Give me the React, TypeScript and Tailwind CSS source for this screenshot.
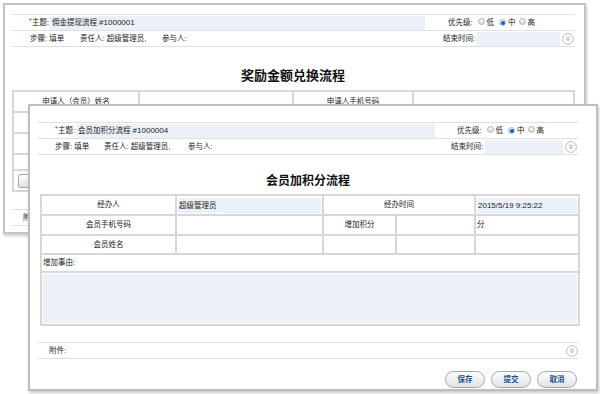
import React from 'react';

const FONT = "font-['Liberation_Sans','Noto_Sans_CJK_SC',sans-serif]";

function ExpandIcon({ className = '' }: { className?: string }) {
  return (
    <svg width="12" height="12" viewBox="0 0 12 12" className={`shrink-0 ${className}`}>
      <circle cx="6" cy="6" r="5.4" fill="#fff" stroke="#b8b8b8" strokeWidth="0.9" />
      <path
        d="M4.2 3.9 6 5.3 7.8 3.9M4.2 6.1 6 7.5 7.8 6.1"
        fill="none"
        stroke="#8c8c8c"
        strokeWidth="0.8"
      />
    </svg>
  );
}

function Radio({ checked = false }: { checked?: boolean }) {
  return (
    <span className="inline-flex h-[7px] w-[7px] shrink-0 items-center justify-center rounded-full border border-[#aab3be] bg-linear-to-b from-[#f6f6f6] to-[#dadada]">
      {checked && <span className="h-[4px] w-[4px] rounded-full bg-[#1d62b9]" />}
    </span>
  );
}

function Priority({ className = '' }: { className?: string }) {
  return (
    <div className={`flex items-center ${className}`}>
      <span>优先级:</span>
      <span className="ml-[5px]"><Radio /></span>
      <span className="ml-[2px]">低</span>
      <span className="ml-[5px]"><Radio checked /></span>
      <span className="ml-[2px]">中</span>
      <span className="ml-[3px]"><Radio /></span>
      <span className="ml-[2px]">高</span>
    </div>
  );
}

function Subject({ width, labelWidth, title, no }: { width: number; labelWidth: number; title: string; no: string }) {
  return (
    <>
      <span className="text-right" style={{ width: labelWidth }}>
        <span className="relative -top-[2px] text-[#e02020]">*</span>主题:
      </span>
      <div className="ml-[1px] h-[14px] bg-[#ebf1f7] pl-[2px] leading-[14px]" style={{ width }}>
        {title} <span className="text-[8px]">{no}</span>
      </div>
    </>
  );
}

function Btn({ children }: { children: React.ReactNode }) {
  return (
    <button className="h-[17px] w-[40px] rounded-full border border-[#a0a8b4] bg-linear-to-b from-white to-[#dfe2e7] text-[7.5px] font-bold leading-[15px] text-[#1f4f8f] shadow-[inset_0_1px_0_#fff]">
      {children}
    </button>
  );
}

const td = 'border-2 border-[#d7d7d7] p-0';
const inputBox = 'h-full bg-[#ebf1f7] px-[1px]';

function BackWindow() {
  return (
    <div className="absolute left-[3px] top-[3px] h-[231px] w-[583px] border-2 border-[#c4c4c4] bg-white shadow-[1px_2px_3px_rgba(0,0,0,0.2)]">
      <div className="ml-[6px] mt-[9px] w-[564px]">
        <div className="flex h-[16px] items-center border-t border-[#e0e0e0]">
          <Subject width={375} labelWidth={38} title="佣金提现流程" no="#1000001" />
          <Priority className="ml-[23px]" />
        </div>
        <div className="flex h-[17px] items-center border-y border-[#e0e0e0]">
          <span className="ml-[19px] w-[50px]">步骤: 填单</span>
          <span className="w-[82px]">责任人: 超级管理员,</span>
          <span>参与人:</span>
          <span className="ml-auto">结束时间:</span>
          <div className="ml-[1px] h-[14px] w-[84px] bg-[#ebf1f7]" />
          <ExpandIcon className="ml-[2px] mr-[1px]" />
        </div>
        <div className="h-[43px] pt-[21px] text-center text-[13px] font-bold leading-[15px] text-[#111]">
          奖励金额兑换流程
        </div>
        <table className="ml-[1px] w-[561px] table-fixed border-collapse">
          <colgroup>
            <col className="w-[126px]" />
            <col className="w-[154px]" />
            <col className="w-[120px]" />
            <col className="w-[161px]" />
          </colgroup>
          <tbody>
            <tr className="h-[21px]">
              <td className={`${td} text-center`}>申请人（会员）姓名</td>
              <td className={`${td} p-[1px]`}><div className={inputBox} /></td>
              <td className={`${td} text-center`}>申请人手机号码</td>
              <td className={`${td} p-[1px]`}><div className={inputBox} /></td>
            </tr>
            <tr className="h-[21px]"><td className={td} /><td className={td} /><td className={td} /><td className={td} /></tr>
            <tr className="h-[21px]"><td className={td} /><td className={td} /><td className={td} /><td className={td} /></tr>
            <tr className="h-[16px]"><td className={td} colSpan={4} /></tr>
            <tr className="h-[21px]">
              <td className={`${td} pl-[4px]`} colSpan={4}>
                <div className="h-[14px] w-[40px] rounded-[2px] border border-[#a8a8a8] bg-linear-to-b from-white to-[#e0e0e0]" />
              </td>
            </tr>
          </tbody>
        </table>
        <div className="mt-[17px] flex h-[17px] items-center border-y border-[#e0e0e0] pl-[12px]">附件:</div>
      </div>
    </div>
  );
}

function FrontWindow() {
  return (
    <div className="absolute left-[28px] top-[104px] h-[287px] w-[570px] border-2 border-[#bebebe] bg-white shadow-[1px_2px_3px_rgba(0,0,0,0.22)]">
      <div className="ml-[8px] mt-[16px] w-[540px]">
        <div className="flex h-[16px] items-center border-t border-[#e0e0e0]">
          <Subject width={359} labelWidth={37} title="会员加积分流程" no="#1000004" />
          <Priority className="ml-[22px]" />
        </div>
        <div className="flex h-[17px] items-center border-y border-[#e0e0e0]">
          <span className="ml-[17px] w-[49px]">步骤: 填单</span>
          <span className="w-[84px]">责任人: 超级管理员,</span>
          <span>参与人:</span>
          <span className="ml-auto">结束时间:</span>
          <div className="ml-[2px] h-[14px] w-[78px] bg-[#ebf1f7]" />
          <ExpandIcon className="ml-[2px] mr-[1px]" />
        </div>
        <div className="h-[39px] pt-[19px] text-center text-[12px] font-bold leading-[14px] text-[#111]">
          会员加积分流程
        </div>
        <table className="ml-[2px] w-[538px] table-fixed border-collapse">
          <colgroup>
            <col className="w-[135px]" />
            <col className="w-[147px]" />
            <col className="w-[73px]" />
            <col className="w-[79px]" />
            <col className="w-[104px]" />
          </colgroup>
          <tbody>
            <tr className="h-[20px]">
              <td className={`${td} text-center`}>经办人</td>
              <td className={`${td} p-[1px]`}><div className={`${inputBox} leading-[15px]`}>超级管理员</div></td>
              <td className={`${td} text-center`} colSpan={2}>经办时间</td>
              <td className={`${td} p-[1px]`}>
                <div className={`${inputBox} text-[8px] leading-[15px]`}>2015/5/19 9:25:22</div>
              </td>
            </tr>
            <tr className="h-[20px]">
              <td className={`${td} text-center`}>会员手机号码</td>
              <td className={`${td} p-[1px]`}><div className={inputBox} /></td>
              <td className={`${td} text-center`}>增加积分</td>
              <td className={`${td} p-[1px]`}><div className={inputBox} /></td>
              <td className={`${td} pl-[1px]`}>分</td>
            </tr>
            <tr className="h-[19px]">
              <td className={`${td} text-center`}>会员姓名</td>
              <td className={td} /><td className={td} /><td className={td} /><td className={td} />
            </tr>
            <tr className="h-[18px]">
              <td className={`${td} pl-[1px]`} colSpan={5}>增加事由:</td>
            </tr>
            <tr className="h-[53px]">
              <td className={`${td} p-[1px]`} colSpan={5}><div className="h-[49px] bg-[#ebf1f7]" /></td>
            </tr>
          </tbody>
        </table>
        <div className="mt-[16px] flex h-[17px] items-center border-y border-[#e0e0e0] pl-[11px]">
          <span>附件:</span>
          <ExpandIcon className="ml-auto mr-[0px]" />
        </div>
        <div className="mt-[12px] flex justify-end gap-[6px] pr-[1px]">
          <Btn>保存</Btn>
          <Btn>提交</Btn>
          <Btn>取消</Btn>
        </div>
      </div>
    </div>
  );
}

export default function App() {
  return (
    <div className={`relative h-[394px] w-[600px] overflow-hidden bg-white text-[7.5px] text-[#222] ${FONT}`}>
      <BackWindow />
      <FrontWindow />
    </div>
  );
}
